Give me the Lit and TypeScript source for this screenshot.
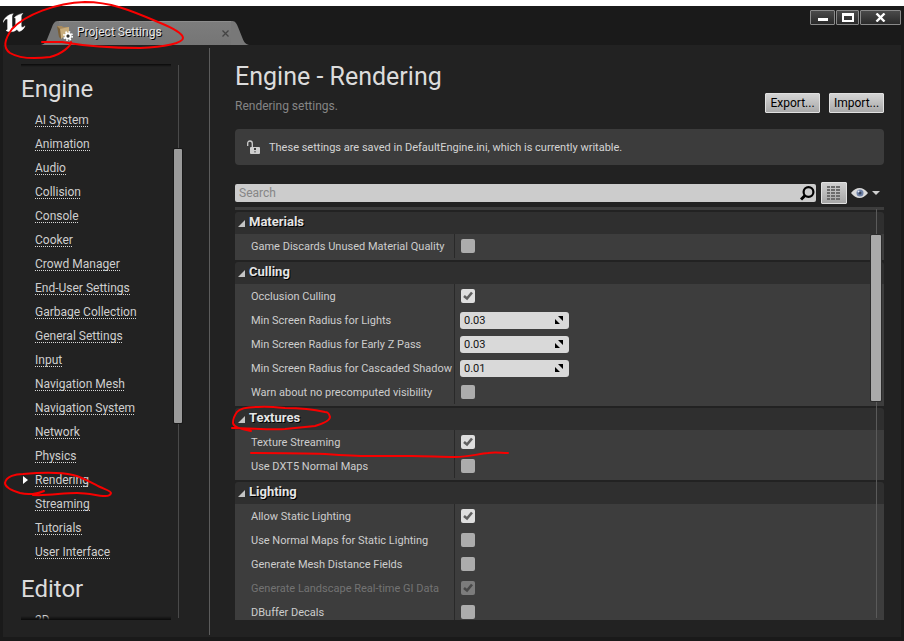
import { LitElement, html, css, svg, nothing } from "lit";
import { customElement, property } from "lit/decorators.js";
import { classMap } from "lit/directives/class-map.js";

type Row = {
  label: string;
  kind: "check" | "number";
  checked?: boolean;
  value?: string;
  disabled?: boolean;
};
type Section = { title: string; rows: Row[] };

const NAV = [
  {
    title: "Engine",
    items: [
      "AI System", "Animation", "Audio", "Collision", "Console", "Cooker",
      "Crowd Manager", "End-User Settings", "Garbage Collection",
      "General Settings", "Input", "Navigation Mesh", "Navigation System",
      "Network", "Physics", "Rendering", "Streaming", "Tutorials",
      "User Interface",
    ],
  },
  { title: "Editor", items: ["2D"] },
];

const SECTIONS: Section[] = [
  {
    title: "Materials",
    rows: [{ label: "Game Discards Unused Material Quality", kind: "check" }],
  },
  {
    title: "Culling",
    rows: [
      { label: "Occlusion Culling", kind: "check", checked: true },
      { label: "Min Screen Radius for Lights", kind: "number", value: "0.03" },
      { label: "Min Screen Radius for Early Z Pass", kind: "number", value: "0.03" },
      { label: "Min Screen Radius for Cascaded Shadow Maps", kind: "number", value: "0.01" },
      { label: "Warn about no precomputed visibility", kind: "check" },
    ],
  },
  {
    title: "Textures",
    rows: [
      { label: "Texture Streaming", kind: "check", checked: true },
      { label: "Use DXT5 Normal Maps", kind: "check" },
    ],
  },
  {
    title: "Lighting",
    rows: [
      { label: "Allow Static Lighting", kind: "check", checked: true },
      { label: "Use Normal Maps for Static Lighting", kind: "check" },
      { label: "Generate Mesh Distance Fields", kind: "check" },
      { label: "Generate Landscape Real-time GI Data", kind: "check", checked: true, disabled: true },
      { label: "DBuffer Decals", kind: "check" },
    ],
  },
];

@customElement("title-bar")
class TitleBar extends LitElement {
  static styles = css`
    :host {
      display: flex;
      justify-content: space-between;
      align-items: flex-start;
      height: 39px;
      flex: none;
    }
    .left { display: flex; height: 100%; align-items: flex-end; }
    .logo { width: 24px; height: 20px; margin: 0 14px 12px 3px; }
    .tab { display: flex; height: 24px; color: #e6e6e6; }
    .cap { display: block; width: 18px; height: 24px; }
    .body {
      display: flex;
      align-items: center;
      width: 172px;
      background: linear-gradient(#7d7d7d, #757575);
      box-shadow: inset 0 1px #8c8c8c;
      font-size: 12px;
    }
    .name { flex: 1; text-shadow: 1px 1px #000; padding-left: 4px; padding-bottom: 2px; }
    .folder { width: 16px; height: 16px; margin-left: -2px; }
    .close { border: 0; padding: 0; background: none; width: 12px; height: 16px; display: grid; place-items: center; }
    .controls { display: flex; gap: 1px; margin: 4px 3px 0 0; }
    .win {
      box-sizing: border-box;
      width: 25px;
      height: 15px;
      padding: 0;
      display: grid;
      place-items: center;
      border: 1px solid #8a8a8a;
      border-radius: 1px;
      background: linear-gradient(#4a4a4a, #2a2a2a);
    }
    .wide { width: 41px; }
    .mid { width: 23px; }
  `;

  render() {
    return html`
      <div class="left">
        <svg class="logo" viewBox="0 0 24 20" aria-hidden="true">
          <path fill="#fff" stroke="#fff" stroke-width=".5" d="M0 9.500C1.200 5 5 1.600 10.200.8 9.300 1.800 9 2.600 9 4v8.700c0 1.300.5 1.800 1.500 1.800.8 0 1.500-.3 2.200-.9V6.200c0-1.200-.3-1.500-1.300-1.500C12.800 3 15 1.600 19.800.4c-1 1.100-1.600 2-1.600 3.300v9.100c0 1 .4 1.500 1.200 1.500.8 0 1.700-.6 2.600-1.400-.9 2.700-3 4.800-6 5.700l-2.100-2.100c-1.800 1.500-3.700 2.200-6 2.200-1.800 0-3.300-.3-4.900-1.300 1.100-.2 1.600-.7 1.600-1.900V7.400c0-1-.4-1.400-1.300-1.300C2 6.300 1.300 7.500 0 9.500z"/>
        </svg>
        <div class="tab">
          <svg class="cap" viewBox="0 0 18 24" aria-hidden="true">
            <path fill="#787878" d="M0 24C4 23 5 21 7 16L11 6C13 1 14 0 18 0V24z"/>
          </svg>
          <div class="body">
            <svg class="folder" viewBox="0 0 16 16" aria-hidden="true">
              <path fill="#a88a5e" d="M0 1h5l1 1h6v10H4z"/>
              <path fill="#c9ad7c" d="M3 4l9-2v5l-8 7z"/>
              <path fill="#7b6038" d="M0 1l3 3 1 10-2-2z"/>
              <g fill="none" stroke="#fff">
                <circle cx="11" cy="11" r="2.500" stroke-width="2"/>
                <circle cx="11" cy="11" r="4.200" stroke-width="1.600" stroke-dasharray="1.700 1.600"/>
              </g>
              <circle cx="11" cy="11" r="1.500" fill="#333"/>
            </svg>
            <span class="name">Project Settings</span>
            <button class="close" aria-label="Close tab">
              <svg width="7" height="7" viewBox="0 0 7 7"><path d="M.5.5l6 6M6.500.5l-6 6" stroke="#444" stroke-width="1.300"/></svg>
            </button>
          </div>
          <svg class="cap" viewBox="0 0 18 24" aria-hidden="true">
            <path fill="#787878" d="M18 24C14 23 13 21 11 16L7 6C5 1 4 0 0 0V24z"/>
          </svg>
        </div>
      </div>
      <div class="controls">
        <button class="win" aria-label="Minimize">
          <svg width="10" height="9"><path fill="#fff" d="M0 5h10v3H0z"/></svg>
        </button>
        <button class="win mid" aria-label="Maximize">
          <svg width="12" height="9"><path fill="#fff" fill-rule="evenodd" d="M0 0h12v9H0zM2 3v4h8V3z"/></svg>
        </button>
        <button class="win wide" aria-label="Close">
          <svg width="11" height="9"><path d="M1.500.5l8 8M9.500.5l-8 8" stroke="#fff" stroke-width="2.400"/></svg>
        </button>
      </div>
    `;
  }
}

@customElement("settings-nav")
class SettingsNav extends LitElement {
  @property() current = "Rendering";

  static styles = css`
    :host {
      box-sizing: border-box;
      display: flex;
      gap: 3px;
      width: 206px;
      flex: none;
      padding: 19px 27px 17px 18px;
      min-height: 0;
    }
    .list {
      position: relative;
      width: 150px;
      overflow: hidden;
    }
    .list::before,
    .list::after {
      content: "";
      position: absolute;
      left: 0;
      right: 0;
      height: 4px;
    }
    .list::before { top: 0; height: 3px; background: linear-gradient(#0a0a0a, #0a0a0a00); }
    .list::after { bottom: 0; background: linear-gradient(#0a0a0a00, #0a0a0a); }
    h2 {
      margin: 0;
      padding-top: 6px;
      font-size: 24px;
      line-height: 38px;
      font-weight: 400;
      color: #dcdcdc;
    }
    ul { margin: 0; padding: 0; list-style: none; }
    li { display: flex; align-items: center; height: 24px; padding-left: 14px; position: relative; }
    a {
      font-size: 12px;
      line-height: 14px;
      color: #cfcfcf;
      text-decoration: none;
      white-space: nowrap;
      background: repeating-linear-gradient(90deg, #d8d8d8 0 1px, #d8d8d800 1px 2px) 0 100% / 100% 1px no-repeat;
    }
    .current::before {
      content: "";
      position: absolute;
      left: 2px;
      border: 4px solid #0000;
      border-left: 5px solid #fff;
      border-right: 0;
    }
    .track {
      width: 8px;
      margin: 1px 0 2px auto;
      display: grid;
      grid-template-rows: 84fr 274fr 195fr;
      background: linear-gradient(#4a4a4a, #4a4a4a) 4px 0 / 1px 100% no-repeat;
    }
    .thumb { grid-row: 2; background: #9b9b9b; border-radius: 1px; box-shadow: 0 0 0 1px #181818; }
  `;

  render() {
    return html`
      <nav class="list">
        ${NAV.map(
          (g) => html`
            <h2>${g.title}</h2>
            <ul>
              ${g.items.map(
                (i) => html`<li class=${classMap({ current: i === this.current })}><a href="#">${i}</a></li>`,
              )}
            </ul>
          `,
        )}
      </nav>
      <div class="track"><div class="thumb"></div></div>
    `;
  }
}

@customElement("property-section")
class PropertySection extends LitElement {
  @property({ attribute: false }) section!: Section;

  static styles = css`
    :host { display: block; }
    h3 {
      display: flex;
      align-items: center;
      gap: 4px;
      height: 22px;
      margin: 0;
      padding-left: 3px;
      border-radius: 3px 3px 0 0;
      background: #2f2f2f;
      color: #e4e4e4;
      font-size: 13px;
      line-height: 20px;
      font-weight: 700;
      text-shadow: 1px 1px #000;
    }
    .title { height: 22px; }
    .rows { background: #3d3d3d; padding-bottom: 2px; }
    .row { display: grid; grid-template-columns: 219px 1fr; height: 24px; }
    .label {
      padding-left: 16px;
      overflow: hidden;
      white-space: nowrap;
      font-size: 11px;
      line-height: 26px;
      height: 24px;
      color: #cdcdcd;
    }
    .value { display: flex; align-items: center; padding-left: 5px; border-left: 1px solid #292929; }
    .box { display: grid; place-items: center; width: 14px; margin-left: 1px; }
    .box > * { grid-area: 1 / 1; }
    .check { appearance: none; width: 14px; height: 14px; margin: 0; border-radius: 2px; background: #acacac; }
    .check:checked { background: #dedede; }
    .tick { pointer-events: none; stroke: #5f5f5f; }
    .off .label { color: #737373; }
    .off .check { background: #7c7c7c; }
    .off .tick { stroke: #484848; }
    .field {
      display: flex;
      align-items: center;
      box-sizing: border-box;
      width: 109px;
      height: 17px;
      padding: 0 6px 0 4px;
      border-radius: 3px;
      background: #d9d9d9;
    }
    .num {
      flex: 1;
      min-width: 0;
      padding: 0;
      border: 0;
      outline: 0;
      background: none;
      font: 11px/17px Roboto, sans-serif;
      color: #111;
    }
  `;

  private control(r: Row, id: string) {
    if (r.kind === "number") {
      return html`<span class="field">
        <input class="num" id=${id} type="text" inputmode="decimal" .value=${r.value ?? ""} />
        <svg width="8" height="8" viewBox="0 0 8 8" aria-hidden="true">
          <path d="M3 0h5v5zM0 3l5 5H0z" />
        </svg>
      </span>`;
    }
    return html`<span class="box">
      <input class="check" id=${id} type="checkbox" .checked=${!!r.checked} ?disabled=${!!r.disabled} />
      ${r.checked
        ? html`<svg class="tick" width="10" height="10" viewBox="0 0 10 10" aria-hidden="true">
            <path d="M1 5l3 2.500L9 1.500" fill="none" stroke-width="2.600" />
          </svg>`
        : nothing}
    </span>`;
  }

  render() {
    const s = this.section;
    return html`
      <h3>
        <svg width="7" height="7" viewBox="0 0 7 7" aria-hidden="true"><path fill="#c4c4c4" d="M7 0v7H0z" /></svg>
        <span class="title">${s.title}</span>
      </h3>
      <div class="rows">
        ${s.rows.map((r, i) => {
          const id = `prop-${i}`;
          return html`<div class=${classMap({ row: true, off: !!r.disabled })}>
            <label class="label" for=${id}>${r.label}</label>
            <div class="value">${this.control(r, id)}</div>
          </div>`;
        })}
      </div>
    `;
  }
}

@customElement("settings-panel")
class SettingsPanel extends LitElement {
  static styles = css`
    :host {
      box-sizing: border-box;
      display: flex;
      flex-direction: column;
      flex: 1;
      min-width: 0;
      min-height: 0;
      padding: 14px 17px 17px 25px;
    }
    .head { display: flex; justify-content: space-between; align-items: flex-end; margin-bottom: 13px; }
    h1 { margin: 0; font-size: 25px; line-height: 36px; font-weight: 400; color: #dcdcdc; }
    .sub { margin: 0; padding-top: 1px; font-size: 12px; line-height: 20px; color: #858585; }
    .actions { display: flex; gap: 9px; margin: 0 0 3px 0; }
    .btn {
      width: 55px;
      height: 20px;
      padding: 0;
      border: 1px solid #e0e0e0;
      border-radius: 1px;
      background: linear-gradient(#d4d4d4, #a9a9a9);
      font: 12px Roboto, sans-serif;
      color: #000;
    }
    .info {
      display: flex;
      align-items: center;
      gap: 9px;
      height: 36px;
      padding-left: 12px;
      border-radius: 4px;
      background: #3c3c3c;
      font-size: 11px;
      color: #d4d4d4;
    }
    .bar { display: flex; align-items: center; height: 24px; margin: 16px 0 2px; }
    .search {
      display: flex;
      align-items: center;
      flex: 1;
      height: 18px;
      padding: 0 1px 0 4px;
      border-radius: 2px;
      background: #cccccc;
    }
    .query {
      flex: 1;
      min-width: 0;
      padding: 0;
      border: 0;
      outline: 0;
      background: none;
      font: 12px/18px Roboto, sans-serif;
      color: #111;
    }
    .query::placeholder { color: #868686; opacity: 1; }
    .grid {
      display: grid;
      place-items: center;
      width: 26px;
      height: 22px;
      margin: 0 4px 0 5px;
      padding: 0;
      border: 1px solid #e0e0e0;
      border-radius: 1px;
      background: linear-gradient(#cfcfcf, #a6a6a6);
    }
    .view { display: flex; align-items: center; gap: 4px; border: 0; padding: 0 4px 0 0; background: none; }
    .table { position: relative; flex: 1; min-height: 0; overflow: hidden; }
    .stub { height: 3px; background: #3d3d3d; }
    .sections { display: grid; gap: 2px; margin-top: 2px; }
    .track {
      position: absolute;
      top: 2px;
      bottom: 2px;
      right: 3px;
      width: 10px;
      display: grid;
      grid-template-rows: 26fr 166fr 217fr;
      background: linear-gradient(#5a5a5a, #5a5a5a) 5px 0 / 1px 100% no-repeat;
    }
    .thumb { grid-row: 2; background: #aaaaaa; border-radius: 1px; box-shadow: 0 0 0 1px #2b2b2b; }
  `;

  render() {
    return html`
      <header class="head">
        <div>
          <h1>Engine - Rendering</h1>
          <p class="sub">Rendering settings.</p>
        </div>
        <div class="actions">
          <button class="btn">Export...</button>
          <button class="btn">Import...</button>
        </div>
      </header>
      <div class="info">
        <svg width="13" height="14" viewBox="0 0 13 14" aria-hidden="true">
          <path d="M.7 6V3.500Q.7 1 3 1t2.300 2.500V7" fill="none" stroke="#cfcfcf" stroke-width="1.300" />
          <path fill="#cfcfcf" fill-rule="evenodd" d="M4 7h8q1 0 1 1v5q0 1-1 1H4q-1 0-1-1V8q0-1 1-1zM7 8v2h2V8zM7.500 11v1.500h1V11z" />
        </svg>
        <span>These settings are saved in DefaultEngine.ini, which is currently writable.</span>
      </div>
      <div class="bar">
        <label class="search">
          <input class="query" type="text" placeholder="Search" aria-label="Search" />
          <svg width="15" height="15" viewBox="0 0 15 15" aria-hidden="true">
            <circle cx="8.500" cy="6" r="4.900" fill="none" stroke="#000" stroke-width="2.200" />
            <path d="M5 9.500l-4 4" stroke="#000" stroke-width="3" />
          </svg>
        </label>
        <button class="grid" aria-label="Property matrix">
          <svg width="14" height="14" viewBox="0 0 14 14">
            ${[0, 3, 6, 9, 12].map(
              (y) => svg`<path fill="#6b6b6b" d="M0 ${y}h3v2h-3zM4 ${y}h4v2h-4zM9 ${y}h4v2h-4z" />`,
            )}
          </svg>
        </button>
        <button class="view" aria-label="View options">
          <svg width="17" height="12" viewBox="0 0 17 12">
            <path fill="#dadada" d="M0 6Q4 1 8.500 1T17 6q-4 5-8.500 5T0 6z" />
            <circle cx="9" cy="6" r="3.500" fill="#6d80a6" />
            <circle cx="9" cy="6" r="1.500" fill="#38435c" />
            <circle cx="7.500" cy="4.500" r="1" fill="#dfe6f5" />
          </svg>
          <svg width="8" height="4" viewBox="0 0 8 4"><path fill="#cfcfcf" d="M0 0h8L4 4z" /></svg>
        </button>
      </div>
      <div class="table">
        <div class="stub"></div>
        <div class="sections">
          ${SECTIONS.map((s) => html`<property-section .section=${s}></property-section>`)}
        </div>
        <div class="track"><div class="thumb"></div></div>
      </div>
    `;
  }
}

@customElement("app-root")
class AppRoot extends LitElement {
  static styles = css`
    :host {
      box-sizing: border-box;
      position: relative;
      display: flex;
      flex-direction: column;
      height: 100vh;
      padding-top: 6px;
      overflow: hidden;
      background: #fff;
      font-family: Roboto, sans-serif;
    }
    .window {
      display: flex;
      flex-direction: column;
      flex: 1;
      min-height: 0;
      background: #1a1a1a;
    }
    .content {
      display: flex;
      flex: 1;
      min-height: 0;
      margin: 0 3px 4px;
      background: #222222;
    }
    .divider { width: 1px; margin: 3px 0 2px; background: #5c5c5c; }
    .marks {
      position: absolute;
      top: 0;
      left: 0;
      pointer-events: none;
      fill: none;
      stroke: #f80000;
      stroke-width: 2;
      stroke-linecap: round;
      stroke-linejoin: round;
    }
  `;

  render() {
    return html`
      <div class="window">
        <title-bar></title-bar>
        <div class="content">
          <settings-nav></settings-nav>
          <div class="divider"></div>
          <settings-panel></settings-panel>
        </div>
      </div>
      <svg class="marks" width="520" height="500" viewBox="0 0 520 500" aria-hidden="true">
        <path d="M42 42H62C85 46 115 48 140 48C165 47 183 43 183 38C183 33 168 26 158 22C130 10 110 2 85 2C55 3 25 15 12 29C4 40 3 48 10 53C22 60 42 58 50 57C62 54 71 46 71 42" />
        <path d="M44 491C38 494 28 495 20 493C10 490 5 487 5 483C6 476 16 474 23 474C35 473 60 472 73 475C85 478 95 485 100 487C107 490 111 491 111 493C110 497 106 496 103 496C95 495 86 493 77 493C62 493 48 496 33 495" />
        <path d="M232 428C250 428 270 430 285 429C295 428 305 427 315 426C325 423 330 420 330 417C329 413 328 412 325 412C312 409 298 408 285 408C275 407 265 406 258 407C247 407 240 408 237 412C234 416 233 420 233 423C234 428 242 429 251 431" />
        <path d="M251 453C275 453 300 453 325 454C340 455 355 456 368 456H412C427 456 441 457 455 457C468 457 478 454 488 453C495 452 501 453 508 453" />
      </svg>
    `;
  }
}
